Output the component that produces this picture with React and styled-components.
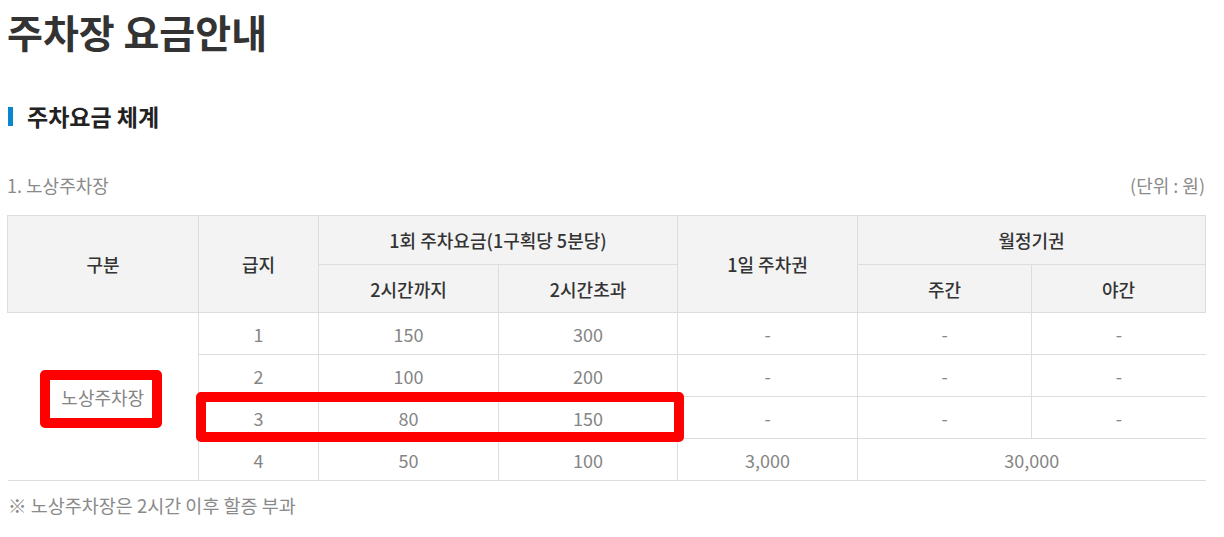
import styled, { createGlobalStyle } from 'styled-components';

const GlobalStyle = createGlobalStyle`
    body {
        margin: 0;
        background: #FFFFFF;
        font-family: "Noto Sans CJK KR", "Noto Sans", sans-serif;
    }
`

const Page = styled.div`
    width: 1198px;
    padding: 0 0 0 7px;
`

const Title = styled.h1`
    margin: 0;
    padding-top: 6px;
    font-size: 39px;
    font-weight: 700;
    line-height: 50px;
    color: #333333;
`

const SectionTitle = styled.h2`
    margin: 45px 0 0 1px;
    display: flex;
    align-items: center;
    gap: 14px;
    font-size: 23px;
    font-weight: 700;
    line-height: 30px;
    color: #222222;

    &::before {
        content: '';
        width: 5px;
        height: 19px;
        background: #0a86cf;
    }
`

const CaptionRow = styled.div`
    margin-top: 42px;
    display: flex;
    justify-content: space-between;
    font-size: 18px;
    line-height: 24px;
    color: #8a8a8a;
`

const TableWrap = styled.div`
    position: relative;
    margin-top: 18px;
`

const Table = styled.table`
    width: 1198px;
    border-collapse: collapse;
    table-layout: fixed;
    font-size: 18px;
    text-align: center;
`

const HeadCell = styled.th`
    height: ${props => props.h}px;
    padding: 0;
    background: #f3f3f3;
    border: 1px solid #dddddd;
    font-weight: 500;
    color: #333333;
`

const Cell = styled.td`
    height: 41px;
    padding: 0;
    border-bottom: 1px solid #dddddd;
    border-left: ${props => props.first ? 'none' : '1px solid #dddddd'};
    color: #858585;
    font-weight: 400;
`

// red annotation boxes drawn over the table
const Highlight = styled.div`
    position: absolute;
    border: 10px solid #ff0000;
    border-radius: 5px;
    pointer-events: none;
`

const Note = styled.p`
    margin: 12px 0 0 1px;
    font-size: 18.5px;
    line-height: 24px;
    color: #8a8a8a;
`

const widths = [191, 120, 180, 179, 180, 174, 174]

const rows = [
    ['1', '150', '300', '-', '-', '-'],
    ['2', '100', '200', '-', '-', '-'],
    ['3', '80', '150', '-', '-', '-'],
]

const App = () => {
    return (
        <Page>
            <GlobalStyle />
            <Title>주차장 요금안내</Title>
            <SectionTitle>주차요금 체계</SectionTitle>
            <CaptionRow>
                <span>1. 노상주차장</span>
                <span>(단위 : 원)</span>
            </CaptionRow>
            <TableWrap>
                <Table>
                    <colgroup>
                        {widths.map((w, i) => <col key={i} style={{ width: w }} />)}
                    </colgroup>
                    <thead>
                        <tr>
                            <HeadCell h={48} rowSpan={2}>구분</HeadCell>
                            <HeadCell h={48} rowSpan={2}>급지</HeadCell>
                            <HeadCell h={48} colSpan={2}>1회 주차요금(1구획당 5분당)</HeadCell>
                            <HeadCell h={48} rowSpan={2}>1일 주차권</HeadCell>
                            <HeadCell h={48} colSpan={2}>월정기권</HeadCell>
                        </tr>
                        <tr>
                            <HeadCell h={47}>2시간까지</HeadCell>
                            <HeadCell h={47}>2시간초과</HeadCell>
                            <HeadCell h={47}>주간</HeadCell>
                            <HeadCell h={47}>야간</HeadCell>
                        </tr>
                    </thead>
                    <tbody>
                        {rows.map((r, idx) => (
                            <tr key={r[0]}>
                                {idx === 0 && <Cell first rowSpan={4}>노상주차장</Cell>}
                                {r.map((v, i) => <Cell key={i}>{v}</Cell>)}
                            </tr>
                        ))}
                        <tr>
                            <Cell>4</Cell>
                            <Cell>50</Cell>
                            <Cell>100</Cell>
                            <Cell>3,000</Cell>
                            <Cell colSpan={2}>30,000</Cell>
                        </tr>
                    </tbody>
                </Table>
                <Highlight style={{ left: 33, top: 155, width: 102, height: 38 }} />
                <Highlight style={{ left: 189, top: 177, width: 468, height: 30 }} />
            </TableWrap>
            <Note>※ 노상주차장은 2시간 이후 할증 부과</Note>
        </Page>
    )
}

export default App;
